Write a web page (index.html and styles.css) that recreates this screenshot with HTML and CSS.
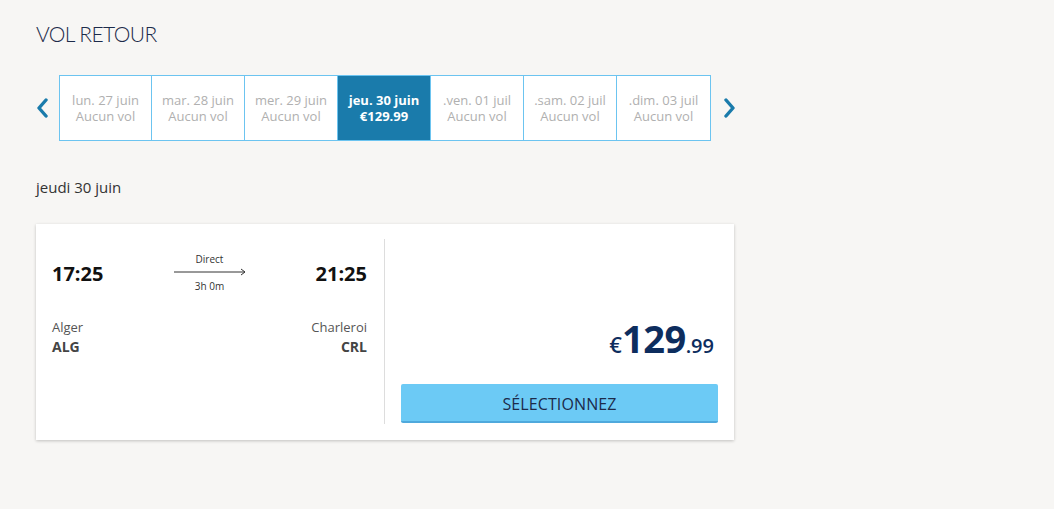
FILE: index.html
```html
<!DOCTYPE html>
<html lang="fr">
<head>
<meta charset="utf-8">
<title>Vol retour</title>
<link rel="stylesheet" href="styles.css">
</head>
<body>
<div class="page">
  <h1 class="title">VOL RETOUR</h1>
  <div class="calendar">
    <button class="nav">
      <svg width="12" height="20" viewBox="0 0 12 20"><path d="M10 2 L3 10 L10 18" fill="none" stroke="#1a7bab" stroke-width="3.4" stroke-linecap="round" stroke-linejoin="round"/></svg>
    </button>
    <div class="days">
      <div class="day"><span>lun. 27 juin</span><span>Aucun vol</span></div>
      <div class="day"><span>mar. 28 juin</span><span>Aucun vol</span></div>
      <div class="day"><span>mer. 29 juin</span><span>Aucun vol</span></div>
      <div class="day active"><span>jeu. 30 juin</span><span>€129.99</span></div>
      <div class="day"><span>.ven. 01 juil</span><span>Aucun vol</span></div>
      <div class="day"><span>.sam. 02 juil</span><span>Aucun vol</span></div>
      <div class="day"><span>.dim. 03 juil</span><span>Aucun vol</span></div>
    </div>
    <button class="nav">
      <svg width="12" height="20" viewBox="0 0 12 20"><path d="M2 2 L9 10 L2 18" fill="none" stroke="#1a7bab" stroke-width="3.4" stroke-linecap="round" stroke-linejoin="round"/></svg>
    </button>
  </div>
  <div class="date">jeudi 30 juin</div>
  <div class="card">
    <div class="flight">
      <div class="times">
        <div class="time">17:25</div>
        <div class="route">
          <div class="small">Direct</div>
          <svg class="arrow" width="72" height="8" viewBox="0 0 72 8"><path d="M0 4 H71 M67 1 L71 4 L67 7" fill="none" stroke="#333" stroke-width="1"/></svg>
          <div class="small">3h 0m</div>
        </div>
        <div class="time">21:25</div>
      </div>
      <div class="places">
        <div class="place"><div class="city">Alger</div><div class="code">ALG</div></div>
        <div class="place right"><div class="city">Charleroi</div><div class="code">CRL</div></div>
      </div>
    </div>
    <div class="offer">
      <div class="price"><span class="cur">€</span><span class="int">129</span><span class="dec">.99</span></div>
      <button class="select">SÉLECTIONNEZ</button>
    </div>
  </div>
</div>
</body>
</html>
```
FILE: styles.css
```css
* { box-sizing: border-box; }
html, body { margin: 0; padding: 0; }
body {
  background: #f7f6f4;
  font-family: "Open Sans", "Liberation Sans", sans-serif;
  color: #333;
  width: 1054px;
  height: 509px;
  overflow: hidden;
}
.page { padding: 22px 0 0 36px; }
.title {
  margin: 0;
  font-family: "Lato", "Open Sans", sans-serif;
  font-weight: 300;
  font-size: 21px;
  line-height: 24px;
  color: #1c2b4a;
  letter-spacing: -0.6px;
}
.calendar {
  display: flex;
  align-items: center;
  margin-top: 29px;
  height: 66px;
}
.nav {
  background: none;
  border: 0;
  padding: 0;
  width: 23px;
  height: 66px;
  display: flex;
  align-items: center;
  cursor: pointer;
}
.nav:first-child { justify-content: flex-start; }
.nav:last-child { justify-content: flex-end; width: 25px; }
.days {
  display: flex;
  border: 1px solid #6cc4f0;
  background: #fff;
  height: 66px;
}
.day {
  width: 93px;
  display: flex;
  flex-direction: column;
  align-items: center;
  justify-content: center;
  font-size: 13px;
  line-height: 16px;
  color: #b0b0b0;
  border-left: 1px solid #6cc4f0;
}
.day:first-child { border-left: 0; width: 91px; }
.day:last-child { width: 94px; }
.day.active {
  background: #1a7bab;
  color: #fff;
  font-weight: 700;
}
.date {
  margin-top: 36px;
  font-size: 15px;
  line-height: 20px;
  color: #333;
}
.card {
  margin-top: 27px;
  width: 698px;
  height: 216px;
  background: #fff;
  box-shadow: 0 1px 3px rgba(0,0,0,0.22);
  display: flex;
  padding: 15px 16px 16px 16px;
}
.flight {
  width: 333px;
  border-right: 1px solid #ddd;
  padding-right: 17px;
}
.times {
  display: flex;
  justify-content: space-between;
  align-items: center;
  padding-top: 15px;
}
.time {
  font-size: 20px;
  font-weight: 700;
  color: #111;
  line-height: 26px;
}
.route {
  display: flex;
  flex-direction: column;
  align-items: center;
  margin-right: 0;
  margin-top: -2px;
}
.small { font-size: 10px; line-height: 14px; color: #333; }
.arrow { display: block; margin: 2px 0 3px; }
.places {
  display: flex;
  justify-content: space-between;
  margin-top: 25px;
}
.place.right { text-align: right; }
.city { font-size: 13px; line-height: 18px; color: #555; }
.code { font-size: 14px; line-height: 22px; font-weight: 700; color: #444; }
.offer {
  flex: 1;
  display: flex;
  flex-direction: column;
  justify-content: flex-end;
  align-items: stretch;
  padding-left: 16px;
  padding-bottom: 1px;
}
.price {
  text-align: right;
  color: #0d2d5e;
  font-family: "Open Sans", sans-serif;
  font-weight: 700;
  margin-bottom: 17px;
  padding-right: 4px;
  line-height: 40px;
}
.cur { font-size: 22px; font-weight: 600; }
.int { font-size: 38px; letter-spacing: -0.5px; }
.dec { font-size: 20px; font-weight: 600; }
.select {
  height: 39px;
  background: #6ccaf5;
  border: 0;
  border-bottom: 2px solid #4fa9dc;
  border-radius: 2px;
  font-family: "Open Sans", sans-serif;
  font-size: 16px;
  color: #1c2b4a;
  letter-spacing: 0.1px;
  cursor: pointer;
  padding: 2px 0 0;
}
```
